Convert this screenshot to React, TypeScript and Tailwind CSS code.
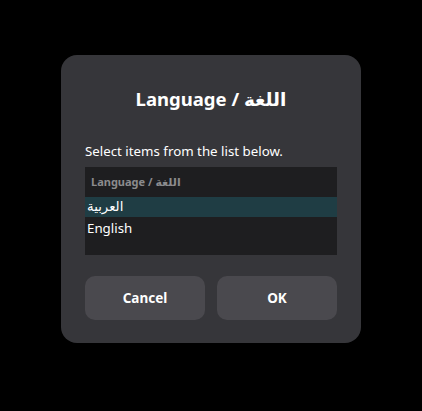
import React from 'react';

const font = { fontFamily: '"Noto Sans", "DejaVu Sans", sans-serif' };

const App: React.FC = () => {
  return (
    <div className="w-[422px] h-[411px] bg-black flex items-start justify-center" style={font}>
      <div className="mt-[55px] w-[300px] h-[288px] rounded-[16px] bg-[#36363a] flex flex-col px-6 pt-[32px] pb-[23px]">
        <div className="text-center text-white font-bold text-[18.5px] leading-[24px]">Language / اللغة</div>
        <div className="mt-[31px] text-[13.3px] leading-[18px] text-white">Select items from the list below.</div>
        <div className="mt-[7px] h-[88px] bg-[#1e1e20] flex flex-col">
          <div className="h-[30px] flex items-center px-[6px] text-[11px] font-bold text-[#8b8b8d]">
            Language / اللغة
          </div>
          <div className="h-[20px] flex items-center px-[2px] bg-[#1f3d44] text-[13.3px] text-white">العربية</div>
          <div className="h-[22px] flex items-center px-[2px] pt-[1px] text-[13.3px] text-white">English</div>
        </div>
        <div className="mt-auto flex gap-3">
          <button className="flex-1 h-[44px] rounded-[10px] bg-[#4a494e] text-white font-bold text-[13.5px]">Cancel</button>
          <button className="flex-1 h-[44px] rounded-[10px] bg-[#4a494e] text-white font-bold text-[13.5px]">OK</button>
        </div>
      </div>
    </div>
  );
};

export default App;
